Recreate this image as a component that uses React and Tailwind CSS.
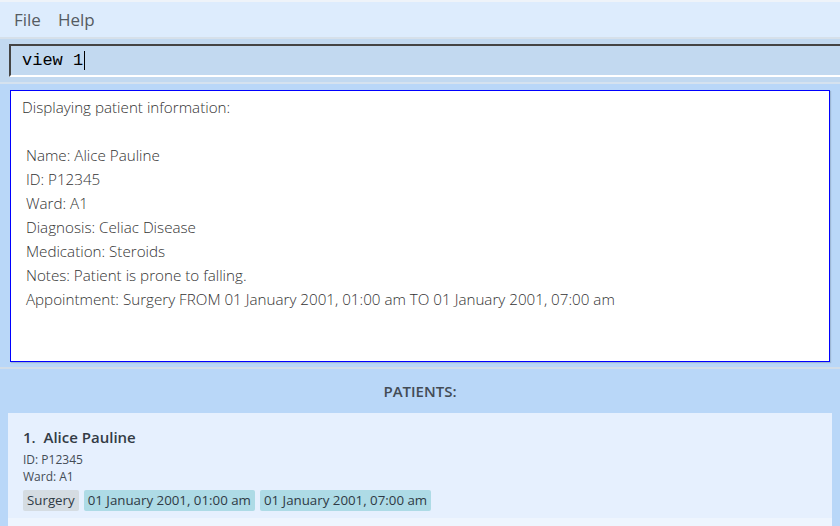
import React from 'react'

const resultText = `Displaying patient information:

 Name: Alice Pauline
 ID: P12345
 Ward: A1
 Diagnosis: Celiac Disease
 Medication: Steroids
 Notes: Patient is prone to falling.
 Appointment: Surgery FROM 01 January 2001, 01:00 am TO 01 January 2001, 07:00 am`

function Tag({ children, gray }) {
  return (
    <span
      className={
        gray
          ? 'rounded-[2px] bg-[#d5dce2] px-[4px] py-[1px] text-[13.3px] leading-[19px] font-medium text-[#2f3a45]'
          : 'rounded-[2px] bg-[#aedbe6] px-[4px] py-[1px] text-[13.3px] leading-[19px] font-medium text-[#2f3a45]'
      }
    >
      {children}
    </span>
  )
}

export default function App() {
  return (
    <div className="flex h-[526px] w-[840px] flex-col overflow-hidden bg-[#b9d7f8] font-['Open_Sans','Noto_Sans',sans-serif]">
      {/* menu bar */}
      <div className="flex h-[39px] items-center gap-[17px] border-t-2 border-b-2 border-t-[#eef3f9] border-b-[#d6e0ea] bg-[#ddecfd] px-[14px] text-[17px] text-[#555b62]">
        <span>File</span>
        <span>Help</span>
      </div>

      {/* command box */}
      <div className="h-[45px] border-b-2 border-[#d5e2ef] bg-[#c2d9f0] pl-[9px] pt-[5px]">
        <div className="flex h-[33px] items-center border-t-2 border-l-2 border-b-2 border-t-[#444] border-l-[#444] border-b-white pl-[11px] font-['Liberation_Mono',monospace] text-[17px] text-black">
          <span>view 1</span>
          <span className="ml-[1px] inline-block h-[19px] w-px bg-black" />
        </div>
      </div>

      {/* result display */}
      <div className="border-b-2 border-[#d2dde8] px-[10px] pt-[6px] pb-[5px]">
        <div className="h-[272px] border border-[#0000ff] bg-white px-[11px] pt-[4px] shadow-[1px_1px_1px_rgba(0,0,0,0.15)]">
          <pre className="whitespace-pre font-['Open_Sans','Noto_Sans',sans-serif] text-[15.2px] font-light leading-[24px] text-[#333]">
            {resultText}
          </pre>
        </div>
      </div>

      {/* patient list */}
      <div className="flex flex-1 flex-col">
        <div className="flex h-[44px] items-center justify-center text-[15px] font-semibold text-[#434b55]">
          PATIENTS:
        </div>
        <div className="mr-[8px] ml-[8px] flex flex-1 flex-col">
          <div className="flex h-[105px] flex-col bg-[#e6f0fe] px-[15px] pt-[15px]">
            <div className="text-[15px] leading-[18px] font-semibold text-[#333b45]">
              1.&nbsp;&nbsp;Alice Pauline
            </div>
            <div className="mt-[5px] text-[12px] leading-[17px] text-[#444c55]">ID: P12345</div>
            <div className="text-[12px] leading-[17px] text-[#444c55]">Ward: A1</div>
            <div className="mt-[5px] flex gap-[5px]">
              <Tag gray>Surgery</Tag>
              <Tag>01 January 2001, 01:00 am</Tag>
              <Tag>01 January 2001, 07:00 am</Tag>
            </div>
          </div>
          <div className="flex-1 bg-[#eef5fe]" />
        </div>
      </div>
    </div>
  )
}
